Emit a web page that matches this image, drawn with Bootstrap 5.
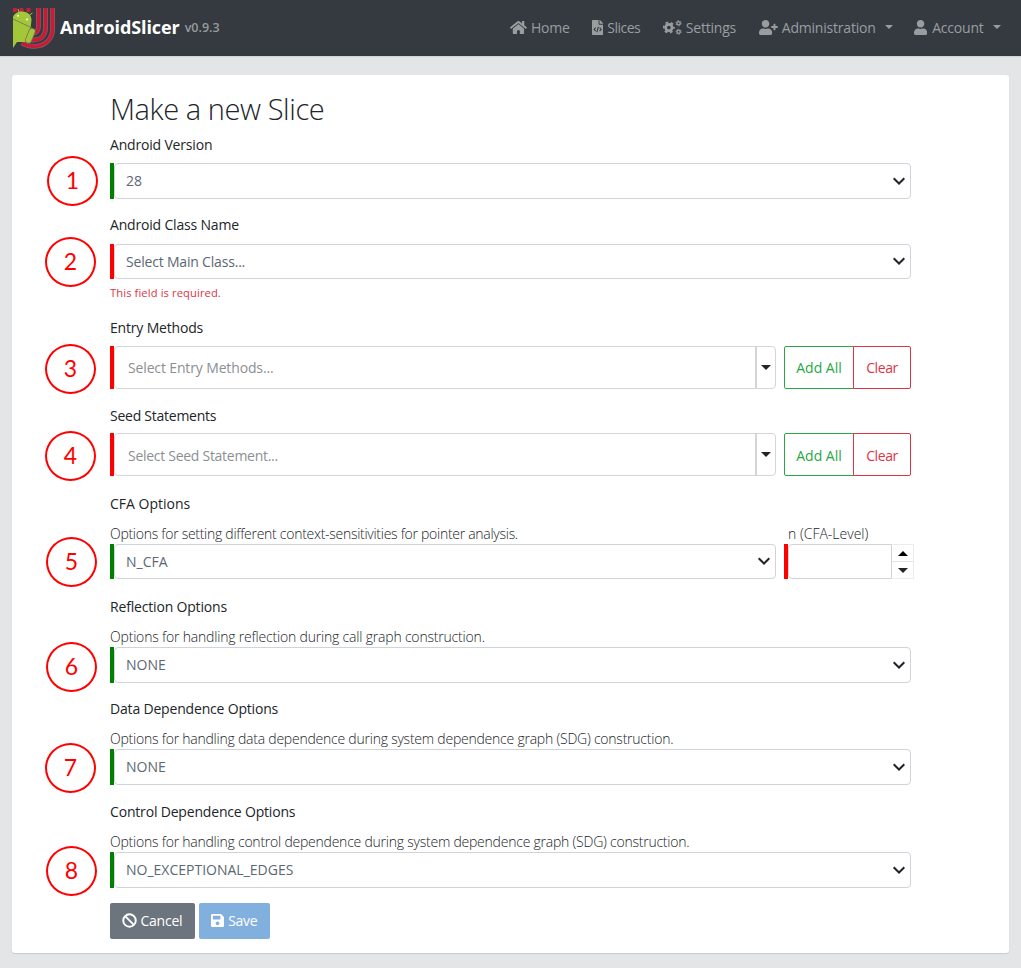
<!DOCTYPE html>
<html lang="en">
<head>
<meta charset="utf-8">
<meta name="viewport" content="width=device-width, initial-scale=1">
<title>AndroidSlicer</title>
<link href="https://cdn.jsdelivr.net/npm/bootstrap@5.3.0/dist/css/bootstrap.min.css" rel="stylesheet">
<style>
body{background:#e4e5e6;font-family:"Open Sans","Noto Sans",sans-serif;font-size:14px;color:#212529;line-height:22px;height:968px;overflow:hidden}
.topbar{height:56px;background:#343a40;padding:0 20px 0 12px;box-shadow:0 1px 1px #d3d5d7}
.brand-name{font-size:18px;font-weight:700;color:#fff;margin-left:5px;letter-spacing:-.09px;position:relative;top:-1px}
.brand-ver{font-size:12.5px;font-weight:600;color:#969a9d;margin-left:5px}
.topbar .nav-link{color:#9a9da0;padding:0;white-space:nowrap;display:flex;align-items:center;line-height:22px;letter-spacing:-.2px}
.fa{height:15px;fill:currentColor;flex:none;margin-right:4px}
.topbar .fa{margin-top:-2px}
.topbar .dropdown-toggle::after{margin-left:auto;border-top-width:4.5px;border-left-width:4.5px;border-right-width:4.5px;vertical-align:0;position:relative;top:-1px}
.n1{width:82px}.topbar .n2{width:71px;letter-spacing:-.5px}.n3{width:96px}.topbar .n4{width:134px;margin-right:21px;letter-spacing:-.2px}.n5{width:87px}
.n5 .fa{margin-right:5px}
.sheet{margin:19px 12px 0;height:878px;border:0;border-radius:3px;box-shadow:0 1px 1px #c8cbce;padding:17px 98px 0;--bs-card-border-width:0}
h2{font-size:29px;font-weight:300;line-height:34px;margin:0 0 8px;height:34px;letter-spacing:-.42px}
.grp{position:relative;height:102.7px}
.lbl{height:29px;line-height:22px;display:block;letter-spacing:-.18px}
.low .lbl,.low .hint{line-height:24px}
.hint{font-weight:300;height:22px;line-height:22px;margin-top:1px;white-space:nowrap;letter-spacing:-.23px}
.t0{letter-spacing:0!important}.t1{letter-spacing:-.19px!important}.t2{letter-spacing:-.25px!important}.t3{letter-spacing:-.28px!important}
.ok{border-left:4.6px solid green}
.bad{border-left:4.6px solid red}
.form-select{height:36px;border:1px solid #ced4da;border-radius:4px;font-size:14px;padding:0 36px 0 11px;color:#5c6873;background-position:right 4px center;background-size:14px 14px;line-height:34px;
background-image:url("data:image/svg+xml,%3csvg xmlns='http://www.w3.org/2000/svg' viewBox='0 0 14 14'%3e%3cpath fill='none' stroke='%23212529' stroke-width='2' d='M1.7 4.3 7 9.5 12.3 4.3'/%3e%3c/svg%3e")}
.form-select.short{height:35px;line-height:33px;background-position:right 4px top 9px}
.multi{height:43px;width:666px;flex:none}
.multi .box{border:1px solid #d3d6d9;border-radius:4px;height:43px;line-height:42px;padding-left:13px;color:#8b8f94;letter-spacing:-.14px}
.seed .box{line-height:43px}
.multi .arrow{width:20px;border-left:2px solid #d5d5d5}
.tri{width:0;height:0;border:5px solid transparent;border-bottom:0;border-top-color:#212529}
.tri.up{border-top:0;border-bottom:5px solid #000}
.btn{font-size:14px;border-radius:2px;padding:0}
.multi-btns{margin-left:8px;width:127px;letter-spacing:-.3px}
.seed + .multi-btns .btn{padding-top:1px}
.multi-btns .btn-outline-success{width:70px;flex:none;--bs-btn-color:#28a745;--bs-btn-border-color:#28a745}
.multi-btns .btn-outline-danger{--bs-btn-color:#dc3545;--bs-btn-border-color:#dc3545;letter-spacing:-.4px}
.err{font-size:11.2px;color:#dc3545;line-height:18px;margin-top:5px;letter-spacing:.1px}
.num{width:130px;height:35px}
.num .box{border:1px solid #d0d4d8;border-radius:4px 0 0 4px;height:35px}
.spin{width:22px;border:1px solid #ececec;border-left:0}
.spin div{height:16px}
.spin div+div{border-top:1px solid #e4e4e4;height:17px}
.step-no{position:absolute;width:51px;height:50px;margin-top:1px;border:2px solid red;border-radius:50%;color:red;font:23px/44px Lato,sans-serif;text-align:center}
.actions{margin-left:-.5px}
.actions .btn{height:36px;display:flex;align-items:center;color:#fff;border:0;letter-spacing:-.25px}
.b-cancel{width:85.5px;background:#6c757d;padding-left:12px!important}
.b-save{width:71px;background:#81b0de;padding-left:12px!important;margin-left:4px}
</style>
</head>
<body>
<nav class="topbar d-flex align-items-center">
  <a class="d-flex align-items-center text-decoration-none" href="#">
    <svg width="43" height="43" viewBox="0 0 43 43">
      <g fill="none" stroke="#77696b" stroke-width="4.800">
        <path d="M40.600 1V21.500C40.600 33 32 39.300 22 39.300C17 39.300 13 38 10 36"/>
        <path d="M33.500 1V21.500C33.500 28.500 28.500 33 22 33H16"/>
        <path d="M26.400 1V20C26.400 24 24 26 20 27"/>
      </g>
      <g fill="none" stroke="#cb1a37" stroke-width="3.500">
        <path d="M40.600 1V21.500C40.600 33 32 39.300 22 39.300C17 39.300 13 38 10 36"/>
        <path d="M33.500 1V21.500C33.500 28.500 28.500 33 22 33H16"/>
        <path d="M26.400 1V20C26.400 24 24 26 20 27"/>
      </g>
      <path fill="#c41e3a" d="M1 1h4v4H1zM7.500 1h4v4h-4zM14.500 1h4v4h-4z"/>
      <path fill="#a4c639" d="M1 10C2 6.500 6 4.500 10 4.500 16 4.500 19.500 8.500 19.500 13L18.500 22 14 35 5 35 1 41Z"/>
      <path fill="none" stroke="#72705b" stroke-width="7" stroke-linecap="round" d="M20 24.500 16.500 33"/>
      <path fill="none" stroke="#a4c639" stroke-width="5.500" stroke-linecap="round" d="M20 24.500 16.500 33"/>
      <path fill="none" stroke="#a4c639" d="M17.500 8 20.500 6M7 5 6 2"/>
      <path fill="none" stroke="#72705b" stroke-width=".8" d="M1 12 20 21"/>
      <circle cx="6" cy="8.700" r="1" fill="#fff"/><circle cx="15" cy="12.500" r="1" fill="#fff"/>
    </svg>
    <span class="brand-name">AndroidSlicer</span><span class="brand-ver">v0.9.3</span>
  </a>
  <div class="nav ms-auto flex-nowrap">
    <a class="nav-link n1" href="#"><svg class="fa" viewBox="0 0 576 512"><path d="M280.370 148.260L96 300.110V464a16 16 0 0 0 16 16l112.060-.29a16 16 0 0 0 15.920-16V368a16 16 0 0 1 16-16h64a16 16 0 0 1 16 16v95.640a16 16 0 0 0 16 16.050L464 480a16 16 0 0 0 16-16V300L295.670 148.260a12.190 12.190 0 0 0-15.300 0zM571.600 251.470L488 182.560V44.050a12 12 0 0 0-12-12h-56a12 12 0 0 0-12 12v72.610L318.470 43a48 48 0 0 0-61 0L4.340 251.470a12 12 0 0 0-1.600 16.900l25.500 31A12 12 0 0 0 45.150 301l235.220-193.740a12.190 12.190 0 0 1 15.300 0L530.900 301a12 12 0 0 0 16.900-1.600l25.500-31a12 12 0 0 0-1.700-16.930z"/></svg><span>Home</span></a>
    <a class="nav-link n2" href="#"><svg class="fa" viewBox="0 0 384 512"><path d="M384 122v6H256V0h6c6 0 12 2 17 7l98 98c5 5 7 11 7 17zM248 160c-13 0-24-11-24-24V0H24C11 0 0 11 0 24v464c0 13 11 24 24 24h336c13 0 24-11 24-24V160z"/><path fill="none" stroke="#343a40" stroke-width="36" d="M125 260 70 320 125 380M259 260 314 320 259 380M218 232 166 418"/></svg><span>Slices</span></a>
    <a class="nav-link n3" href="#"><svg class="fa" viewBox="0 0 640 512"><g fill="none" stroke="currentColor"><circle cx="200" cy="256" r="110" stroke-width="92"/><circle cx="200" cy="256" r="175" stroke-width="60" stroke-dasharray="96 87.260" stroke-dashoffset="48"/><circle cx="532" cy="110" r="56" stroke-width="48"/><circle cx="532" cy="110" r="90" stroke-width="30" stroke-dasharray="47 47.200"/><circle cx="532" cy="402" r="56" stroke-width="48"/><circle cx="532" cy="402" r="90" stroke-width="30" stroke-dasharray="47 47.200"/></g></svg><span>Settings</span></a>
    <a class="nav-link n4 dropdown-toggle" href="#"><svg class="fa" viewBox="0 0 640 512"><path d="M624 208h-64v-64c0-8.800-7.200-16-16-16h-32c-8.800 0-16 7.200-16 16v64h-64c-8.800 0-16 7.200-16 16v32c0 8.800 7.200 16 16 16h64v64c0 8.800 7.200 16 16 16h32c8.800 0 16-7.200 16-16v-64h64c8.800 0 16-7.200 16-16v-32c0-8.800-7.200-16-16-16z"/><path d="M224 256c70.700 0 128-57.300 128-128S294.700 0 224 0 96 57.300 96 128s57.300 128 128 128zm89.600 32h-16.700c-22.200 10.200-46.900 16-72.900 16s-50.600-5.800-72.900-16h-16.700C60.200 288 0 348.200 0 422.400V464c0 26.500 21.500 48 48 48h352c26.500 0 48-21.500 48-48v-41.600c0-74.200-60.200-134.400-134.400-134.400z"/></svg><span>Administration</span></a>
    <a class="nav-link n5 dropdown-toggle" href="#"><svg class="fa" viewBox="0 0 448 512"><path d="M224 256c70.700 0 128-57.300 128-128S294.700 0 224 0 96 57.300 96 128s57.300 128 128 128zm89.600 32h-16.700c-22.200 10.200-46.900 16-72.900 16s-50.600-5.800-72.900-16h-16.700C60.200 288 0 348.200 0 422.400V464c0 26.500 21.500 48 48 48h352c26.500 0 48-21.500 48-48v-41.600c0-74.200-60.200-134.400-134.400-134.400z"/></svg><span>Account</span></a>
  </div>
</nav>
<main class="card sheet">
  <h2>Make a new Slice</h2>
  <form>
    <div class="grp" style="height:80px"><label class="lbl">Android Version</label><div class="ok"><select class="form-select"><option>28</option></select></div><span class="step-no" style="left:-63px;top:21px">1</span></div>
    <div class="grp" style="height:102px"><label class="lbl mb-0">Android Class Name</label><div class="bad" style="margin-top:1px"><select class="form-select short t1"><option>Select Main Class...</option></select></div><div class="err">This field is required.</div><span class="step-no" style="left:-65px;top:22px">2</span></div>
    <div class="grp low" style="height:88px"><label class="lbl">Entry Methods</label><div class="d-flex" style="padding-top:1px"><div class="bad multi"><div class="box d-flex"><span class="flex-grow-1">Select Entry Methods...</span><span class="arrow d-flex align-items-center justify-content-center"><i class="tri"></i></span></div></div><div class="btn-group multi-btns"><button type="button" class="btn btn-outline-success">Add All</button><button type="button" class="btn btn-outline-danger">Clear</button></div></div><span class="step-no" style="left:-65px;top:27px">3</span></div>
    <div class="grp low" style="height:88px"><label class="lbl t2">Seed Statements</label><div class="d-flex"><div class="bad multi seed"><div class="box d-flex t3"><span class="flex-grow-1">Select Seed Statement...</span><span class="arrow d-flex align-items-center justify-content-center"><i class="tri"></i></span></div></div><div class="btn-group multi-btns"><button type="button" class="btn btn-outline-success">Add All</button><button type="button" class="btn btn-outline-danger">Clear</button></div></div><span class="step-no" style="left:-65px;top:26px">4</span></div>
    <div class="grp low"><label class="lbl t0">CFA Options</label><div class="d-flex"><div class="flex-shrink-0" style="width:666px"><div class="hint t3"><span>Options for setting different context-sensitivities for pointer analysis.</span></div><div class="ok"><select class="form-select short"><option>N_CFA</option></select></div></div><div class="flex-shrink-0" style="margin-left:8px"><div class="hint ps-1 t0"><span>n (CFA-Level)</span></div><div class="num bad d-flex"><div class="box flex-grow-1"></div><div class="spin"><div class="d-flex align-items-center justify-content-center"><i class="tri up"></i></div><div class="d-flex align-items-center justify-content-center"><i class="tri"></i></div></div></div></div></div><span class="step-no" style="left:-64px;top:44px">5</span></div>
    <div class="grp low"><label class="lbl">Reflection Options</label><div class="hint t1"><span>Options for handling reflection during call graph construction.</span></div><div class="ok"><select class="form-select"><option>NONE</option></select></div><span class="step-no" style="left:-64px;top:46px">6</span></div>
    <div class="grp low"><label class="lbl">Data Dependence Options</label><div class="hint"><span>Options for handling data dependence during system dependence graph (SDG) construction.</span></div><div class="ok"><select class="form-select"><option>NONE</option></select></div><span class="step-no" style="left:-65px;top:45px">7</span></div>
    <div class="grp low"><label class="lbl">Control Dependence Options</label><div class="hint"><span>Options for handling control dependence during system dependence graph (SDG) construction.</span></div><div class="ok"><select class="form-select"><option>NO_EXCEPTIONAL_EDGES</option></select></div><span class="step-no" style="left:-64px;top:45px">8</span></div>
    <div class="actions d-flex">
      <button type="button" class="btn b-cancel"><svg class="fa" viewBox="0 0 512 512"><g fill="none" stroke="currentColor" stroke-width="66"><circle cx="256" cy="256" r="214"/><path d="M108 108 404 404"/></g></svg><span>Cancel</span></button>
      <button type="button" class="btn b-save"><svg class="fa" viewBox="0 0 448 512"><path d="M433.941 129.941l-83.882-83.882A48 48 0 0 0 316.118 32H48C21.490 32 0 53.490 0 80v352c0 26.510 21.490 48 48 48h352c26.510 0 48-21.490 48-48V163.882a48 48 0 0 0-14.059-33.941zM224 416c-35.346 0-64-28.654-64-64 0-35.346 28.654-64 64-64s64 28.654 64 64c0 35.346-28.654 64-64 64zm96-304.520V212c0 6.627-5.373 12-12 12H76c-6.627 0-12-5.373-12-12V108c0-6.627 5.373-12 12-12h228.520c3.183 0 6.235 1.264 8.485 3.515l3.480 3.480A11.996 11.996 0 0 1 320 111.480z"/></svg><span>Save</span></button>
    </div>
  </form>
</main>
<script src="https://cdn.jsdelivr.net/npm/bootstrap@5.3.0/dist/js/bootstrap.bundle.min.js"></script>
</body>
</html>
